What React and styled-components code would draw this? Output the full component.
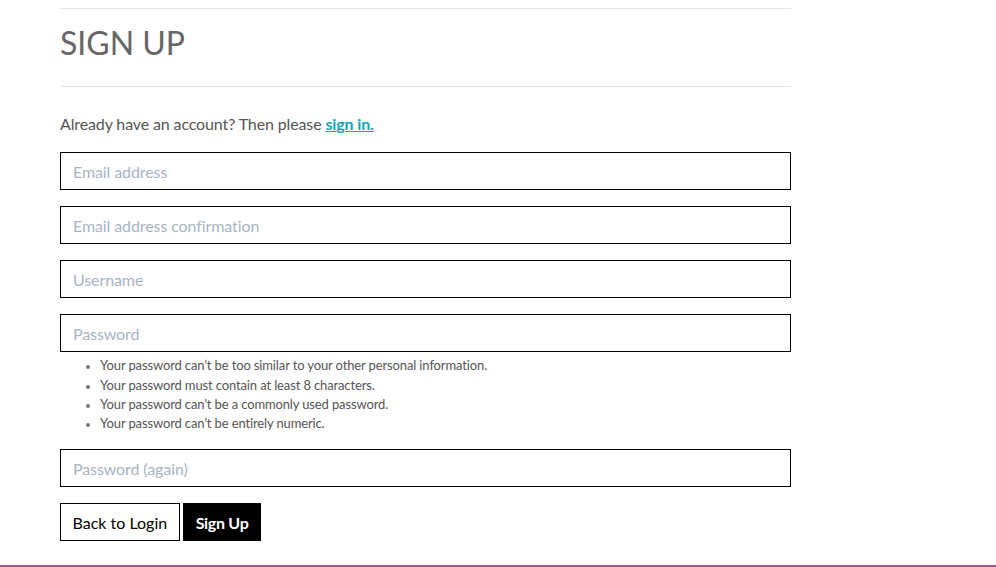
import React from "react";
import styled, { createGlobalStyle } from "styled-components";

const GlobalStyle = createGlobalStyle`
  html, body {
    margin: 0;
    padding: 0;
    background: #fff;
  }
  body {
    font-family: Lato, "Open Sans", "Liberation Sans", sans-serif;
    color: #555;
  }
  * {
    box-sizing: border-box;
  }
`;

const Page = styled.div`
  padding-top: 8px;
`;

const Container = styled.main`
  width: 731px;
  margin-left: 60px;
`;

const Rule = styled.hr`
  border: none;
  border-top: 1px solid #e5e5e5;
  margin: 0;
`;

const Title = styled.h1`
  font-size: 32px;
  font-weight: 400;
  line-height: 1.2;
  color: #666;
  margin: 15px 0 24px;
`;

const Intro = styled.p`
  font-size: 16px;
  line-height: 24px;
  letter-spacing: -0.13px;
  margin: 25px 0 16px;
  color: #555;
`;

const SignInLink = styled.a`
  color: #17a2b8;
  font-weight: 700;
  text-decoration: underline;
`;

const Form = styled.form`
  display: flex;
  flex-direction: column;
`;

const Field = styled.div`
  margin-bottom: 16px;
`;

const Input = styled.input`
  display: block;
  width: 100%;
  height: 38px;
  border: 1px solid #000;
  border-radius: 0;
  padding: 0 12px;
  font-family: inherit;
  font-size: 16px;
  letter-spacing: -0.1px;
  color: #333;
  outline: none;
  &::placeholder {
    color: #a8b4c4;
  }
`;

const HelpList = styled.ul`
  margin: 4px 0 0;
  padding-left: 40px;
  font-size: 13px;
  line-height: 19.2px;
  letter-spacing: -0.13px;
  color: #555;
  li::marker {
    color: #777;
    font-size: 11px;
  }
`;

const Actions = styled.div`
  display: flex;
  gap: 3px;
`;

const Button = styled.button`
  height: 38px;
  padding: 0 ${(p) => (p.$primary ? "12px" : "11.5px")};
  font-family: inherit;
  font-size: 16px;
  letter-spacing: ${(p) => (p.$primary ? "-0.3px" : "0")};
  border-radius: 0;
  cursor: pointer;
  border: 1px solid #000;
  background: ${(p) => (p.$primary ? "#000" : "#fff")};
  color: ${(p) => (p.$primary ? "#fff" : "#000")};
  font-weight: ${(p) => (p.$primary ? 700 : 400)};
`;

const Footer = styled.footer`
  margin-top: 24px;
  border-top: 2px solid #9b5196;
  height: 40px;
`;

const hints = [
  "Your password can’t be too similar to your other personal information.",
  "Your password must contain at least 8 characters.",
  "Your password can’t be a commonly used password.",
  "Your password can’t be entirely numeric.",
];

function App() {
  return (
    <Page>
      <GlobalStyle />
      <Container>
        <Rule />
        <Title>SIGN UP</Title>
        <Rule />
        <Intro>
          Already have an account? Then please{" "}
          <SignInLink href="#">sign in.</SignInLink>
        </Intro>
        <Form onSubmit={(e) => e.preventDefault()}>
          <Field>
            <Input type="email" placeholder="Email address" />
          </Field>
          <Field>
            <Input type="email" placeholder="Email address confirmation" />
          </Field>
          <Field>
            <Input type="text" placeholder="Username" />
          </Field>
          <Field>
            <Input type="password" placeholder="Password" />
            <HelpList>
              {hints.map((h) => (
                <li key={h}>{h}</li>
              ))}
            </HelpList>
          </Field>
          <Field>
            <Input type="password" placeholder="Password (again)" />
          </Field>
          <Actions>
            <Button type="button">Back to Login</Button>
            <Button type="submit" $primary>
              Sign Up
            </Button>
          </Actions>
        </Form>
      </Container>
      <Footer />
    </Page>
  );
}

export default App;
